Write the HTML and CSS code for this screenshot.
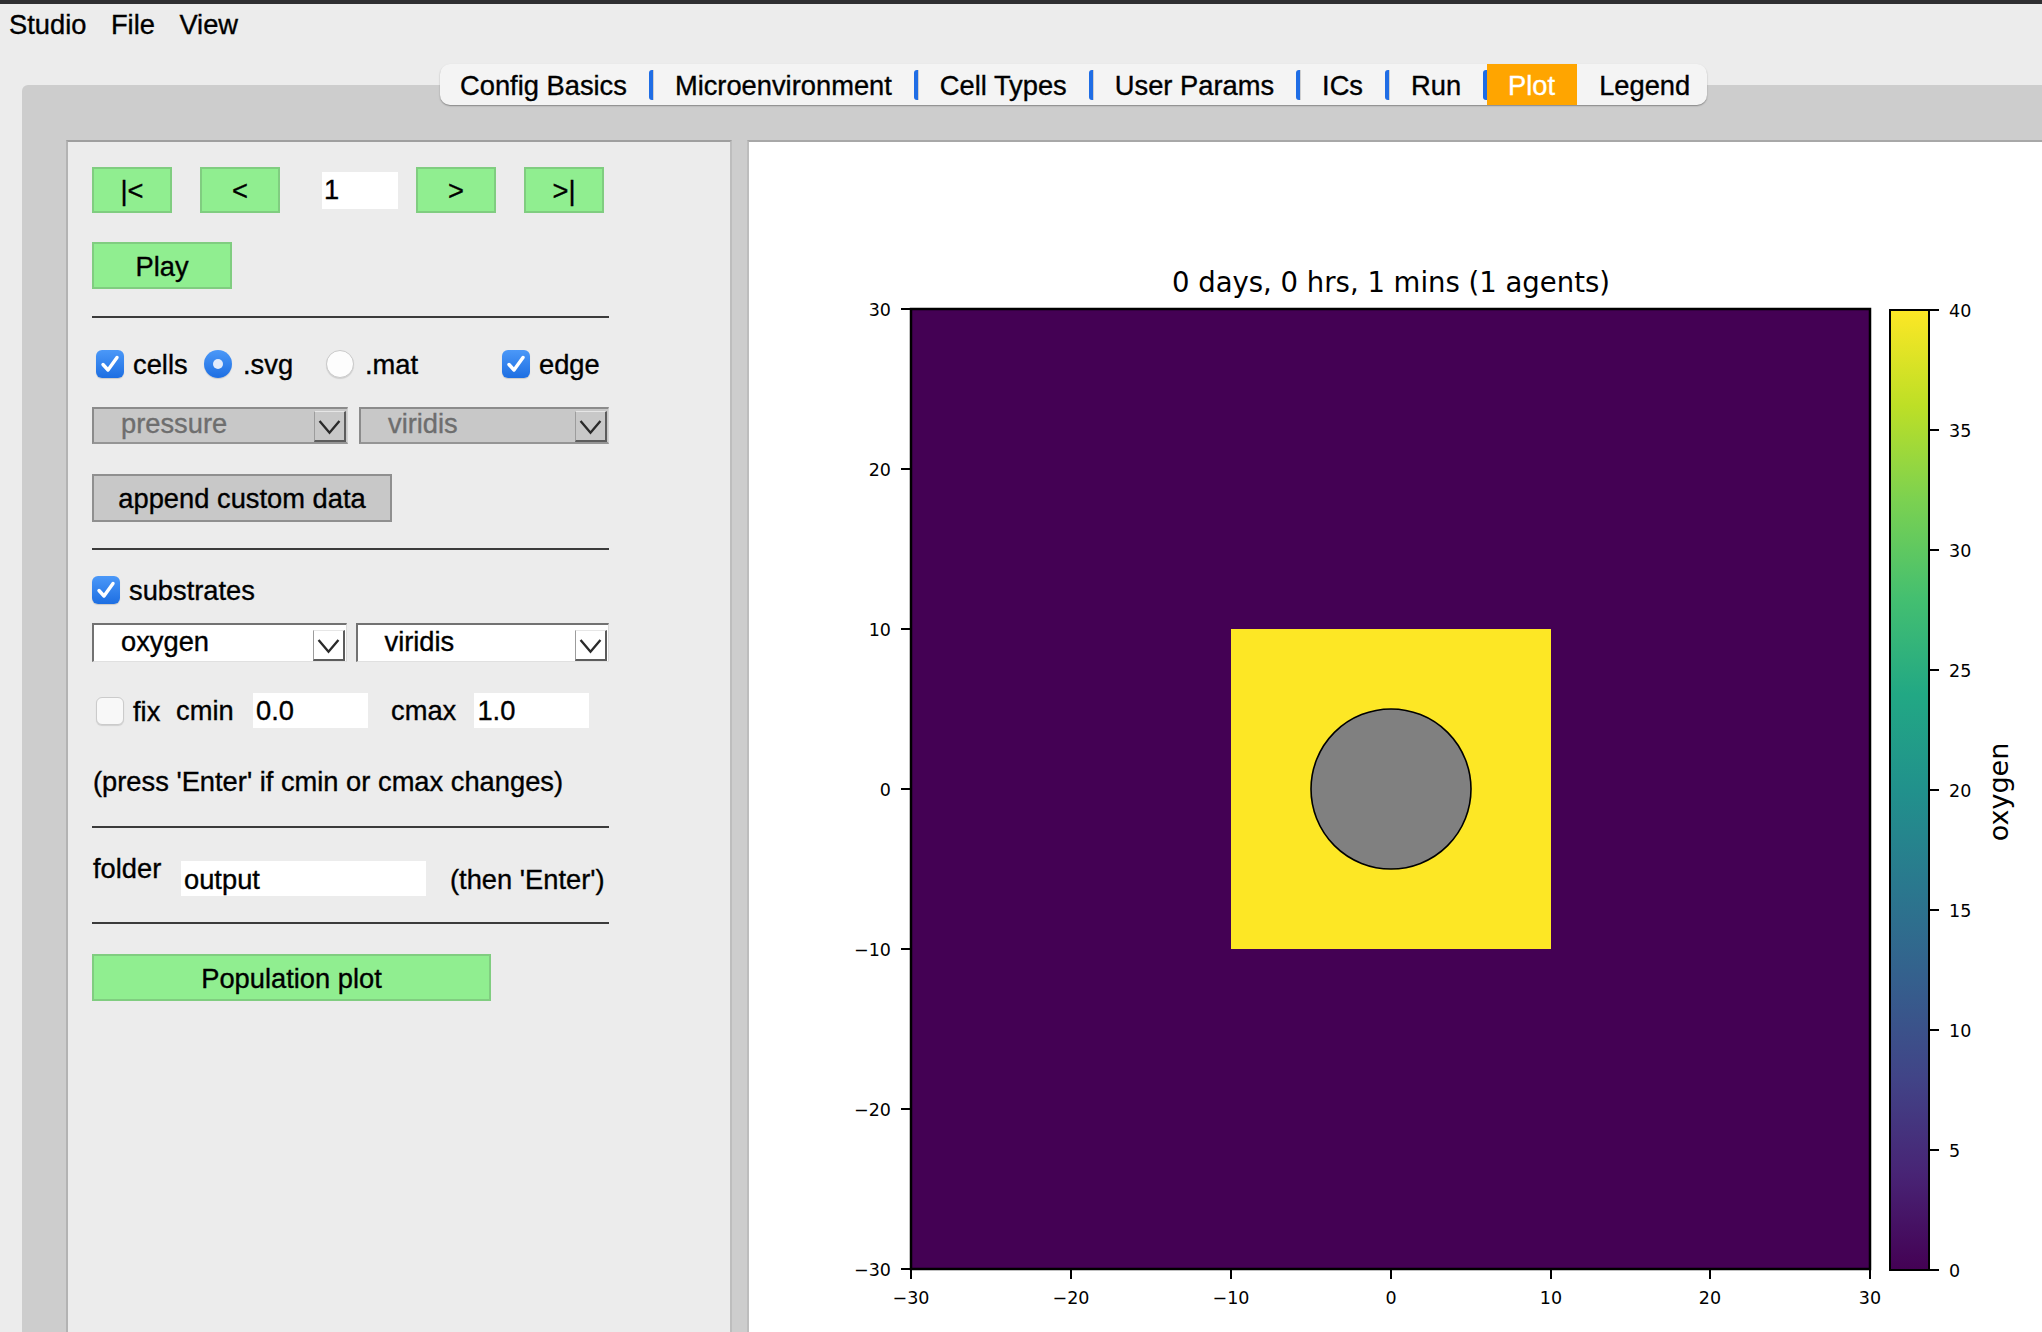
FILE: index.html
```html
<!DOCTYPE html>
<html>
<head>
<meta charset="utf-8">
<title>Studio</title>
<link rel="stylesheet" href="styles.css">
</head>
<body>
<div class="topstrip"></div>
<div class="menubar">
  <span class="menu">Studio</span>
  <span class="menu">File</span>
  <span class="menu">View</span>
</div>
<div class="tabbar">
  <span class="tab first">Config Basics</span><span class="sep"></span>
  <span class="tab">Microenvironment</span><span class="sep"></span>
  <span class="tab">Cell Types</span><span class="sep"></span>
  <span class="tab">User Params</span><span class="sep"></span>
  <span class="tab">ICs</span><span class="sep"></span>
  <span class="tab">Run</span><span class="sep"></span>
  <span class="tab active">Plot</span>
  <span class="tab last">Legend</span>
</div>
<div class="pane">
  <div class="panel">
    <div class="content">
      <div class="row nav">
        <div class="btn nb">|&lt;</div>
        <div class="btn nb nb2">&lt;</div>
        <div class="inp frame">1</div>
        <div class="btn nb nb3">&gt;</div>
        <div class="btn nb nb2">&gt;|</div>
      </div>
      <div class="row play">
        <div class="btn playbtn">Play</div>
      </div>
      <div class="hr hr1"></div>
      <div class="row checks">
        <div class="grp g-cells"><span class="cb on"><svg viewBox="0 0 28 28"><path d="M7 14.5 L12 20 L21 7.5"/></svg></span><span class="lbl">cells</span></div>
        <div class="grp g-svg"><span class="rb on"></span><span class="lbl lr">.svg</span></div>
        <div class="grp g-mat"><span class="rb off"></span><span class="lbl lr">.mat</span></div>
        <div class="grp g-edge"><span class="cb on"><svg viewBox="0 0 28 28"><path d="M7 14.5 L12 20 L21 7.5"/></svg></span><span class="lbl">edge</span></div>
      </div>
      <div class="row sels1">
        <div class="sel dis w-pressure"><span class="seltext">pressure</span><span class="arrow"><svg viewBox="0 0 32 31"><path d="M5 10 L16 23 L27 10"/></svg></span></div>
        <div class="sel dis w-vir1"><span class="seltext">viridis</span><span class="arrow"><svg viewBox="0 0 32 31"><path d="M5 10 L16 23 L27 10"/></svg></span></div>
      </div>
      <div class="row append">
        <div class="graybtn">append custom data</div>
      </div>
      <div class="hr hr2"></div>
      <div class="row subs">
        <span class="cb on"><svg viewBox="0 0 28 28"><path d="M7 14.5 L12 20 L21 7.5"/></svg></span><span class="lbl">substrates</span>
      </div>
      <div class="row sels2">
        <div class="sel en w-oxy"><span class="seltext">oxygen</span><span class="arrow"><svg viewBox="0 0 32 31"><path d="M5 10 L16 23 L27 10"/></svg></span></div>
        <div class="sel en w-vir2"><span class="seltext">viridis</span><span class="arrow"><svg viewBox="0 0 32 31"><path d="M5 10 L16 23 L27 10"/></svg></span></div>
      </div>
      <div class="row fix">
        <span class="cb off"></span>
        <span class="lbl c-fix">fix</span>
        <span class="c-cmin">cmin</span>
        <div class="inp cval">0.0</div>
        <span class="c-cmax">cmax</span>
        <div class="inp cval">1.0</div>
      </div>
      <div class="row press">(press 'Enter' if cmin or cmax changes)</div>
      <div class="hr hr3"></div>
      <div class="row folder">
        <span class="c-folder">folder</span>
        <div class="inp outdir">output</div>
        <span class="c-then">(then 'Enter')</span>
      </div>
      <div class="hr hr4"></div>
      <div class="row pop">
        <div class="btn popbtn">Population plot</div>
      </div>
    </div>
  </div>
  <div class="plot">
    <svg class="chart" width="1293" height="1190" viewBox="749 142 1293 1190">
      <defs>
        <linearGradient id="viridis" x1="0" y1="1" x2="0" y2="0">
          <stop offset="0" stop-color="#440154"/>
          <stop offset="0.1" stop-color="#482475"/>
          <stop offset="0.2" stop-color="#414487"/>
          <stop offset="0.3" stop-color="#355f8d"/>
          <stop offset="0.4" stop-color="#2a788e"/>
          <stop offset="0.5" stop-color="#21918c"/>
          <stop offset="0.6" stop-color="#22a884"/>
          <stop offset="0.7" stop-color="#44bf70"/>
          <stop offset="0.8" stop-color="#7ad151"/>
          <stop offset="0.9" stop-color="#bddf26"/>
          <stop offset="1" stop-color="#fde725"/>
        </linearGradient>
      </defs>
      <text class="title" x="1391" y="292">0 days, 0 hrs, 1 mins (1 agents)</text>
      <rect x="911" y="309" width="959" height="960" fill="#440154"/>
      <rect x="1231" y="629" width="320" height="320" fill="#fde725"/>
      <circle cx="1391" cy="789" r="80" fill="#808080" stroke="#000" stroke-width="1.6"/>
      <rect x="911" y="309" width="959" height="960" fill="none" stroke="#000" stroke-width="2.5"/>
      <g class="ticks">
        <line x1="911" y1="1269" x2="911" y2="1279"/>
        <line x1="1071" y1="1269" x2="1071" y2="1279"/>
        <line x1="1231" y1="1269" x2="1231" y2="1279"/>
        <line x1="1391" y1="1269" x2="1391" y2="1279"/>
        <line x1="1551" y1="1269" x2="1551" y2="1279"/>
        <line x1="1710" y1="1269" x2="1710" y2="1279"/>
        <line x1="1870" y1="1269" x2="1870" y2="1279"/>
        <line x1="901" y1="309" x2="911" y2="309"/>
        <line x1="901" y1="469" x2="911" y2="469"/>
        <line x1="901" y1="629" x2="911" y2="629"/>
        <line x1="901" y1="789" x2="911" y2="789"/>
        <line x1="901" y1="949" x2="911" y2="949"/>
        <line x1="901" y1="1109" x2="911" y2="1109"/>
        <line x1="901" y1="1269" x2="911" y2="1269"/>
      </g>
      <g class="xl">
        <text x="911" y="1304">−30</text>
        <text x="1071" y="1304">−20</text>
        <text x="1231" y="1304">−10</text>
        <text x="1391" y="1304">0</text>
        <text x="1551" y="1304">10</text>
        <text x="1710" y="1304">20</text>
        <text x="1870" y="1304">30</text>
      </g>
      <g class="yl">
        <text x="891" y="315.5">30</text>
        <text x="891" y="475.5">20</text>
        <text x="891" y="635.5">10</text>
        <text x="891" y="795.5">0</text>
        <text x="891" y="955.5">−10</text>
        <text x="891" y="1115.5">−20</text>
        <text x="891" y="1275.5">−30</text>
      </g>
      <rect x="1890" y="310" width="39" height="960" fill="url(#viridis)" stroke="#000" stroke-width="2"/>
      <g class="ticks">
        <line x1="1929" y1="310" x2="1939" y2="310"/>
        <line x1="1929" y1="430" x2="1939" y2="430"/>
        <line x1="1929" y1="550" x2="1939" y2="550"/>
        <line x1="1929" y1="670" x2="1939" y2="670"/>
        <line x1="1929" y1="790" x2="1939" y2="790"/>
        <line x1="1929" y1="910" x2="1939" y2="910"/>
        <line x1="1929" y1="1030" x2="1939" y2="1030"/>
        <line x1="1929" y1="1150" x2="1939" y2="1150"/>
        <line x1="1929" y1="1270" x2="1939" y2="1270"/>
      </g>
      <g class="cl">
        <text x="1949" y="316.5">40</text>
        <text x="1949" y="436.5">35</text>
        <text x="1949" y="556.5">30</text>
        <text x="1949" y="676.5">25</text>
        <text x="1949" y="796.5">20</text>
        <text x="1949" y="916.5">15</text>
        <text x="1949" y="1036.5">10</text>
        <text x="1949" y="1156.5">5</text>
        <text x="1949" y="1276.5">0</text>
      </g>
      <text class="cblabel" transform="translate(2008 792) rotate(-90)">oxygen</text>
    </svg>
  </div>
</div>
</body>
</html>
```

FILE: styles.css
```css
* { box-sizing: border-box; }
html, body { margin: 0; padding: 0; }
body {
  width: 2042px;
  height: 1332px;
  overflow: hidden;
  background: #ececec;
  font-family: "Liberation Sans", Arial, sans-serif;
  font-size: 27.3px;
  color: #000;
}
.menubar, .tabbar, .panel { -webkit-text-stroke: 0.35px currentColor; }

.topstrip { height: 4px; background: #2f2f31; }

.menubar {
  height: 42px;
  display: flex;
  align-items: center;
  padding-left: 9px;
  gap: 24.5px;
}

.tabbar {
  position: relative;
  z-index: 1;
  display: flex;
  align-items: center;
  width: max-content;
  height: 41px;
  margin: 18px 0 0 440px;
  background: #f4f4f4;
  border-radius: 10px;
  box-shadow: 0 1px 1.5px rgba(0, 0, 0, 0.35);
  overflow: hidden;
}
.tab { height: 41px; line-height: 43px; padding: 0 22px; white-space: nowrap; }
.tab.first { padding-left: 20px; }
.tab.last { padding-right: 17px; }
.tab.active { background: #ffa500; color: #fff; padding-left: 21px; }
.sep {
  flex: none;
  width: 4px;
  height: 30px;
  background: #1f6de5;
  border-radius: 3px 0 0 3px;
  box-shadow: 1px 0 0 #cfcfcf;
}

.pane {
  display: flex;
  margin: -20px 0 0 22px;
  height: 1247px;
  background: #cdcdcd;
  border-radius: 6px 0 0 0;
  padding: 55px 0 0 44px;
}

.panel {
  flex: none;
  width: 666px;
  background: #ececec;
  border-top: 2px solid #9f9f9f;
  border-left: 2px solid #b3b3b3;
  border-right: 2px solid #bdbdbd;
  padding: 25px 0 0 24px;
}
.content { width: 517px; }

.plot {
  flex: 1;
  margin-left: 15px;
  background: #fff;
  border-top: 2px solid #a8a8a8;
  border-left: 2px solid #bdbdbd;
  overflow: hidden;
}
.chart { display: block; }

/* rows */
.row { display: flex; align-items: center; }
.nav { height: 46px; }
.play { margin-top: 29px; height: 47px; }
.hr { height: 2px; background: #3b3b3b; width: 517px; }
.hr1 { margin-top: 27px; }
.checks { margin-top: 32px; height: 28px; }
.sels1 { margin-top: 29px; height: 37px; gap: 11px; }
.append { margin-top: 30px; height: 48px; }
.hr2 { margin-top: 26px; }
.subs { margin-top: 26px; height: 28px; }
.sels2 { margin-top: 19px; height: 39px; gap: 8.5px; }
.fix { margin-top: 31px; height: 35px; }
.press { margin-top: 39px; height: 30px; padding-left: 1px; white-space: nowrap; }
.hr3 { margin-top: 29px; }
.folder { margin-top: 33px; height: 35px; }
.hr4 { margin-top: 26px; }
.pop { margin-top: 30px; height: 47px; }

/* buttons */
.btn {
  display: flex;
  align-items: center;
  justify-content: center;
  background: #90ee90;
  border: 2px solid #80cd80;
  white-space: nowrap;
}
.nb { width: 80px; height: 46px; padding-top: 2px; }
.nb2 { margin-left: 28px; }
.nb3 { margin-left: 18px; }
.frame { width: 76px; margin-left: 42px; }
.playbtn { width: 140px; height: 47px; padding-top: 2px; }
.popbtn { width: 399px; height: 47px; padding-top: 2px; }
.graybtn {
  display: flex;
  align-items: center;
  justify-content: center;
  width: 300px;
  height: 48px;
  padding-top: 1px;
  background: #c8c8c8;
  border: 2px solid #8f8f8f;
  white-space: nowrap;
}

/* inputs */
.inp {
  display: flex;
  align-items: center;
  height: 37px;
  background: #fff;
  padding-left: 2px;
  white-space: nowrap;
}
.cval { width: 115px; height: 35px; padding-left: 3px; }
.outdir { width: 245px; height: 35px; padding-left: 3px; padding-top: 2px; }

/* check boxes & radios */
.grp { display: flex; align-items: center; height: 28px; flex: none; }
.g-cells { width: 112px; padding-left: 4px; }
.g-svg { width: 122px; }
.g-mat { width: 176px; }
.g-edge { width: 107px; }
.lbl { margin-left: 9px; white-space: nowrap; padding-top: 2px; }
.lr { margin-left: 11px; }

.cb {
  flex: none;
  display: inline-flex;
  width: 28px;
  height: 28px;
  border-radius: 6px;
}
.cb svg { width: 28px; height: 28px; }
.cb path { fill: none; stroke: #fff; stroke-width: 3.4; stroke-linecap: round; stroke-linejoin: round; }
.cb.on { background: linear-gradient(#4b98f8, #1d6ee2); box-shadow: 0 1px 1px rgba(0, 0, 0, 0.15); }
.cb.off { background: #f8f8f8; border: 1px solid #cbcbcb; box-shadow: 0 1px 1px rgba(0, 0, 0, 0.12); }
.fix .cb { margin-left: 4px; }

.rb {
  flex: none;
  display: inline-flex;
  align-items: center;
  justify-content: center;
  width: 28px;
  height: 28px;
  border-radius: 50%;
}
.rb.on { background: linear-gradient(#4b98f8, #1d6ee2); box-shadow: 0 1px 1px rgba(0, 0, 0, 0.15); }
.rb.on::after { content: ""; width: 10px; height: 10px; border-radius: 50%; background: #e2ebfb; }
.rb.off { background: #fdfdfd; border: 1px solid #cacaca; box-shadow: 0 1px 1px rgba(0, 0, 0, 0.12); }

/* fix row cells */
.c-fix { width: 43px; flex: none; }
.c-cmin { width: 77px; flex: none; }
.c-cmax { width: 83.4px; flex: none; margin-left: 23px; }
.c-folder { width: 89px; flex: none; padding-left: 1px; align-self: flex-start; margin-top: -7px; line-height: 30px; }
.c-then { margin-left: 24px; white-space: nowrap; padding-top: 2px; }

/* selects */
.sel {
  display: flex;
  align-items: center;
  justify-content: space-between;
  padding-left: 27px;
  padding-right: 1px;
  flex: none;
}
.seltext { white-space: nowrap; margin-top: -3px; }
.sel.dis {
  height: 37px;
  background: #c8c8c8;
  color: #6e6e6e;
  border-top: 2px solid #8b8b8b;
  border-left: 2px solid #8b8b8b;
  border-bottom: 2px solid #959595;
  border-right: 1px solid #d2d2d2;
}
.sel.en {
  height: 39px;
  background: #fff;
  border-top: 2px solid #727272;
  border-left: 2px solid #727272;
  border-bottom: 1px solid #e0e0e0;
  border-right: 1px solid #dadada;
}
.w-pressure { width: 256px; }
.w-vir1 { width: 250px; }
.w-oxy { width: 255px; }
.w-vir2 { width: 253px; }
.arrow {
  align-self: flex-end;
  display: inline-flex;
  width: 32px;
  height: 31px;
  -webkit-text-stroke: 0;
  border-left: 1px solid #9c9c9c;
  border-top: 1px solid #e6e6e6;
  border-right: 2px solid #5c5c5c;
  border-bottom: 2px solid #5c5c5c;
}
.arrow svg { width: 29px; height: 28px; }
.arrow path { fill: none; stroke: #2a2a2a; stroke-width: 2.6; }

/* chart text */
.chart text { font-family: "DejaVu Sans", sans-serif; fill: #000; }
.chart .title { font-size: 27.5px; text-anchor: middle; }
.chart .xl text { font-size: 17.5px; text-anchor: middle; }
.chart .yl text { font-size: 17.5px; text-anchor: end; }
.chart .cl text { font-size: 17.5px; text-anchor: start; }
.chart .cblabel { font-size: 27px; text-anchor: middle; }
.ticks line { stroke: #000; stroke-width: 2; }
```
